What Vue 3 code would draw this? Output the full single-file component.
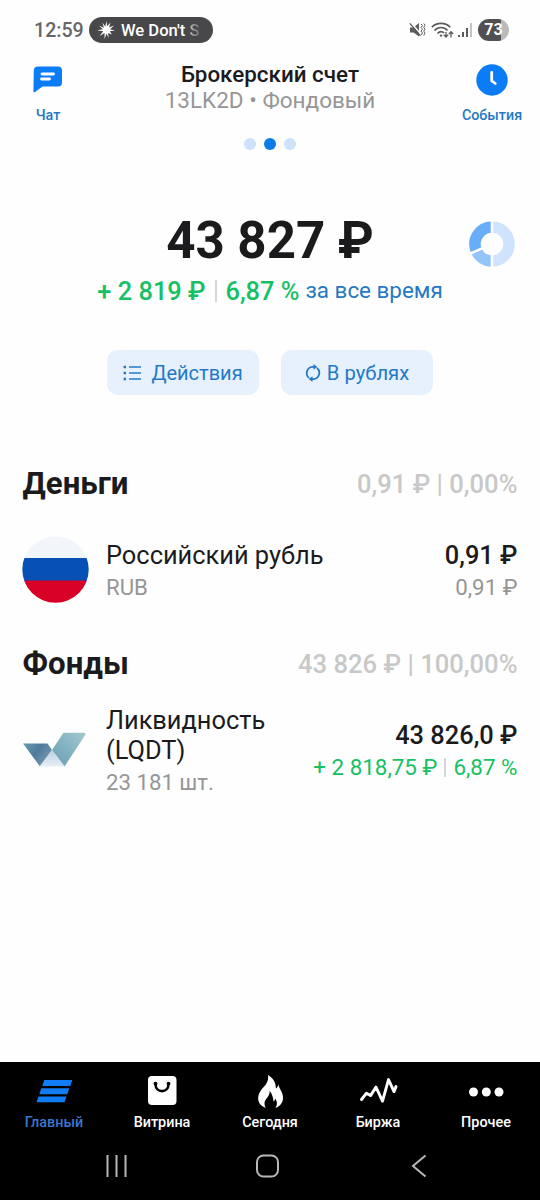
<script setup>
const tabs = [
  { id: 'main', label: 'Главный' },
  { id: 'shop', label: 'Витрина' },
  { id: 'today', label: 'Сегодня' },
  { id: 'market', label: 'Биржа' },
  { id: 'more', label: 'Прочее' },
]
</script>

<template>
  <div class="screen">
    <div class="status">
      <span class="clock">12:59</span>
      <div class="now-playing">
        <svg class="burst" width="18" height="18" viewBox="0 0 18 18">
          <path d="M9.500 0l.6 5.200L13.500 1.500 12 6.500 17 4.500 13 8.200 18 9.500 12.700 10.300 15 13.500 11.200 11.900 11.500 17 9.600 12.500 7.500 18 7.600 12 2.500 15 6.300 10.300 0 9.300 6 8.200 2 4.800 6.900 6.800 5.300 1.500 8.200 5.600z" fill="#fff" />
        </svg>
        <span class="song">We Don't <span class="fade">S</span></span>
      </div>
      <div class="status-right">
        <svg class="mute" width="17" height="16" viewBox="0 0 17 16">
          <path d="M1 5.500h3.500L10 1v13.500L4.500 10.500H1z" fill="#5c5c5e" />
          <path d="M1.500 0L13 13.500" stroke="#fff" stroke-width="1.500" />
          <path d="M.8 1.300L11.500 13.800" stroke="#5c5c5e" stroke-width="1.300" />
          <path d="M12 2l1.500 1.600L12 5.400l1.500 1.800L12 9l1.500 2L12 13M14.800 1.500L16 3.300l-1.200 2L16 7.200l-1.200 2 1.200 2-1.200 2.300" fill="none" stroke="#5c5c5e" stroke-width="1" />
        </svg>
        <svg class="wifi" width="23" height="17" viewBox="0 0 23 17">
          <g fill="none" stroke="#5c5c5e" stroke-width="1.700">
            <path d="M.8 5.300C5.500.1 14.500.1 19.200 5.300M3.500 8.500c3.500-4 9.500-4 13 0M6.500 11.500c2-2.200 4.700-2.200 6.600-.6" />
            <path d="M15 10v5M12.700 12.600l2.300 2.500 2.300-2.500M20 15.500V9.800M17.900 12l2.100-2.400 2.200 2.400" stroke-width="1.300" />
          </g>
          <circle cx="10" cy="13.600" r="1.200" fill="#5c5c5e" />
        </svg>
        <svg class="signal" width="14" height="15" viewBox="0 0 14 15">
          <path d="M0 12h2v2H0zM4 9h2v5H4zM8 5h2v9H8z" fill="#5c5c5e" />
          <path d="M12 0h2v14h-2z" fill="#c4c4c4" />
        </svg>
        <div class="battery">73</div>
      </div>
    </div>

    <header class="header">
      <div class="side chat">
        <svg width="30" height="27" viewBox="0 0 30 27">
          <path d="M5 0h20q4 0 4 4v12q0 4-4 4H9.500L2 25.400Q.4 26.300.4 24.500L.8 4Q1 0 5 0z" fill="#0a7cf6" />
          <path d="M9 7.500h11.500M8.500 12.500h8" stroke="#fff" stroke-width="2.800" stroke-linecap="round" />
        </svg>
        <span>Чат</span>
      </div>
      <div class="account">
        <div class="title">Брокерский счет</div>
        <div class="subtitle">13LK2D • Фондовый</div>
        <div class="dots"><i /><i class="on" /><i /></div>
      </div>
      <div class="side events">
        <svg width="32" height="32" viewBox="0 0 32 32">
          <circle cx="16" cy="16" r="15.700" fill="#0a7cf6" />
          <path d="M15.700 8.500v8.300l3.600 2.700" fill="none" stroke="#fff" stroke-width="2.800" stroke-linecap="round" stroke-linejoin="round" />
        </svg>
        <span>События</span>
      </div>
    </header>

    <section class="summary">
      <div class="balance">43 827 ₽</div>
      <div class="profit">
        <b>+ 2 819 ₽</b><i class="bar" /><b class="pct">6,87 %</b><span>за все время</span>
      </div>
      <svg class="donut" width="46" height="46" viewBox="0 0 46 46">
        <g fill="none" stroke-width="11.500">
          <path d="M23 6a17 17 0 0 1 0 34" stroke="#cfe3fd" />
          <path d="M23 6A17 17 0 0 0 7.600 30.200" stroke="#67adf8" />
          <path d="M7.600 30.200A17 17 0 0 0 23 40" stroke="#94c5fa" />
        </g>
        <path d="M23 0v12M23 34v12M1 32.800l12-5.400" stroke="#fff" stroke-width="2.600" />
      </svg>
    </section>

    <div class="actions">
      <button class="btn">
        <svg class="list-icon" width="19" height="16" viewBox="0 0 19 16">
          <path d="M6 2h12M6 8h12M6 14h12" stroke="#2379c6" stroke-width="1.700" />
          <path d="M.6.8H3v2.400H.6zM.6 6.800H3v2.400H.6zM.6 12.800H3v2.400H.6z" fill="#2379c6" />
        </svg>
        <span class="t-actions">Действия</span>
      </button>
      <button class="btn">
        <svg class="swap-icon" width="16" height="18" viewBox="0 0 16 18">
          <g fill="none" stroke="#2379c6" stroke-width="1.800">
            <path d="M4 14A6.300 6.300 0 0 1 7.500 2.900H10M12 4A6.300 6.300 0 0 1 8.500 15.100H6" />
          </g>
          <path d="M8.500 0l3.800 2.900-3.800 2.800zM7.500 18l-3.800-2.900 3.800-2.800z" fill="#2379c6" />
        </svg>
        <span class="t-rub">В рублях</span>
      </button>
    </div>

    <section class="group">
      <div class="group-head">
        <h2>Деньги</h2><span>0,91 ₽ | 0,00%</span>
      </div>
      <div class="row">
        <svg class="flag" width="68" height="68" viewBox="0 0 68 68">
          <clipPath id="flag-clip"><circle cx="33.500" cy="33.500" r="33.200" /></clipPath>
          <g clip-path="url(#flag-clip)">
            <path d="M0 0h68v23H0z" fill="#f2f6fa" />
            <path d="M0 22h68v23H0z" fill="#0750b5" />
            <path d="M0 44.500h68V68H0z" fill="#d80027" />
          </g>
        </svg>
        <div class="name">
          <div>Российский рубль</div>
          <div class="code">RUB</div>
        </div>
        <div class="value">
          <div>0,91 ₽</div>
          <div class="v-sub">0,91 ₽</div>
        </div>
      </div>
    </section>

    <section class="group funds">
      <div class="group-head">
        <h2>Фонды</h2><span>43 826 ₽ | 100,00%</span>
      </div>
      <div class="row row-fund">
        <svg class="fund-logo" width="68" height="36" viewBox="0 0 68 36">
          <defs>
            <linearGradient id="wing-l" x1="0" y1="0" x2="1" y2="0.600"><stop stop-color="#699caf" /><stop offset=".5" stop-color="#517b9b" /><stop offset="1" stop-color="#7798af" /></linearGradient>
            <linearGradient id="wing-r" x1="1" y1="0" x2="0" y2="1"><stop stop-color="#a3c7d0" /><stop offset="1" stop-color="#669fb3" /></linearGradient>
            <linearGradient id="wing-m" x1="0" y1="0" x2="0" y2="1"><stop stop-color="#b9cfdf" /><stop offset="1" stop-color="#e8eff6" /></linearGradient>
          </defs>
          <path d="M1 11.500H25.500L30 18 18 34.500z" fill="url(#wing-l)" />
          <path d="M41.500.8H61.500q3 0 1.500 2.500L42.500 34.500 30 18z" fill="url(#wing-r)" />
          <path d="M30 18L42.500 34.500H17.500z" fill="url(#wing-m)" />
        </svg>
        <div class="name">
          <div>Ликвидность<br>(LQDT)</div>
          <div class="code">23 181 шт.</div>
        </div>
        <div class="value">
          <div>43 826,0 ₽</div>
          <div class="v-gain"><span>+ 2 818,75 ₽</span><i class="bar" /><span>6,87 %</span></div>
        </div>
      </div>
    </section>

    <footer class="bottom">
      <nav class="tabs">
        <div v-for="t in tabs" :key="t.id" class="tab" :class="t.id">
          <svg width="40" height="36" viewBox="0 0 40 36">
            <path v-if="t.id === 'main'" d="M10.300 6H38.300l-2 6H8.300zM7.300 14.200h28l-2 6h-28zM4.500 22.500h28l-2 5.700h-28z" fill="#117df5" />
            <template v-else-if="t.id === 'shop'">
              <rect x="6" y="2" width="28.500" height="29" rx="4" fill="#fff" />
              <path d="M13.500 10c0 9.500 13 9.500 13 0" fill="none" stroke="#000" stroke-width="2.600" stroke-linecap="round" />
              <circle cx="13.500" cy="9.700" r="1.900" /><circle cx="26.500" cy="9.700" r="1.900" />
            </template>
            <path v-else-if="t.id === 'today'" d="M18 1c7.500 4.500 7.500 9.500 8 13.500 1.700-1.200 2.200-2.700 2-4.500 1.300 5 5.500 8.500 5 14.500-.3 4-2.500 7.500-7.500 9.500 2.300-4 1.500-7-.3-9.500-.2 1.500-.7 2.300-1.700 3-.3-4-1.300-7.500-3.800-10.500.3 6-5.200 7.500-5.200 12.500 0 2 .8 3.500 1.500 4.500C6.500 31 6.500 21.500 11.500 15.500c4-4.500 7.500-8 6.500-14.500z" fill="#fff" />
            <path v-else-if="t.id === 'market'" d="M3.500 25.500l5-6.300 4 2.400 5.500-8.500 6.500 14 6-21.500 5.500 12 2-5" fill="none" stroke="#fff" stroke-width="2.900" stroke-linejoin="round" stroke-linecap="round" />
            <g v-else fill="#fff"><circle cx="7.500" cy="18" r="4.500" /><circle cx="20.300" cy="18" r="4.500" /><circle cx="33" cy="18" r="4.500" /></g>
          </svg>
          <span>{{ t.label }}</span>
        </div>
      </nav>
      <svg class="system" width="540" height="66" viewBox="0 0 540 66" fill="none" stroke="#b8b8b8" stroke-width="2">
        <path d="M107.500 21v22M116.500 21v22M125.500 21v22" />
        <rect x="257" y="21.500" width="21" height="21" rx="6.500" />
        <path d="M425.500 21.500L413 32l12.500 10.500" />
      </svg>
    </footer>
  </div>
</template>

<style>
body { margin: 0; }
</style>

<style scoped>
.screen { width: 540px; height: 1200px; display: flex; flex-direction: column; background: #fefefe; font-family: Roboto, "Noto Sans", sans-serif; color: #1b1b1d; overflow: hidden; white-space: nowrap; }
.status { height: 60px; display: flex; align-items: center; padding: 0 31px 0 34px; box-sizing: border-box; }
.clock { font-size: 19.600px; font-weight: 500; color: #666668; width: 55px; }
.now-playing { width: 124px; height: 26px; border-radius: 13px; background: #48484a; color: #fff; display: flex; align-items: center; box-sizing: border-box; padding-left: 8px; }
.song { margin-left: 6px; font-size: 16.600px; font-weight: 500; }
.fade { background: linear-gradient(90deg, #bbb, #666); background-clip: text; color: transparent; }
.status-right { margin-left: auto; display: flex; align-items: center; }
.wifi { margin-left: 5px; }
.signal { margin-left: 4px; }
.battery { width: 31px; height: 22px; margin-left: 6px; border-radius: 11px; background: linear-gradient(90deg, #505052 73%, #bbb 73%); color: #fff; font-size: 16px; font-weight: 700; line-height: 22px; text-align: center; }
.header { height: 110px; display: flex; justify-content: space-between; }
.side { width: 96px; display: flex; flex-direction: column; align-items: center; font-size: 14.300px; font-weight: 500; color: #2379c6; }
.side svg { height: 32px; margin-top: 4px; }
.side span { margin-top: 10px; line-height: 18px; }
.account { text-align: center; display: flex; flex-direction: column; align-items: center; }
.title { font-size: 22.400px; font-weight: 500; line-height: 26px; margin-top: 1px; }
.subtitle { font-size: 22.500px; line-height: 26px; color: #969696; }
.dots { display: flex; gap: 8px; margin-top: 25px; }
.dots i { width: 12px; height: 12px; border-radius: 50%; background: #cfe2fb; }
.dots .on { background: #0a7be9; }
.summary { height: 180px; position: relative; text-align: center; box-sizing: border-box; padding-top: 41px; }
.balance { font-size: 51px; line-height: 60px; font-weight: 700; }
.profit { display: flex; justify-content: center; align-items: center; font-size: 25.400px; line-height: 36px; margin-top: 2px; color: #16c065; }
.profit b { font-weight: 500; }
.profit span { font-size: 22.400px; margin-left: 6px; color: #2379c6; position: relative; top: -1px; }
.bar { width: 2px; height: 22px; background: #d6d6d6; margin: 0 9px; }
.donut { position: absolute; left: 469px; top: 51px; }
.actions { display: flex; justify-content: center; gap: 22px; }
.btn { width: 152px; height: 45px; border: 0; padding: 0; border-radius: 11px; background: #e6f1fd; color: #2379c6; font: 400 20px Roboto, sans-serif; display: flex; align-items: center; justify-content: center; white-space: nowrap; }
.list-icon { margin-right: 9px; }
.t-rub { font-size: 20.200px; }
.swap-icon { margin-right: 6px; }
.group { padding: 0 22.500px 0 22px; margin-top: 68px; }
.group-head { display: flex; justify-content: space-between; align-items: center; height: 40px; font-size: 25.600px; font-weight: 500; color: #c8c8c8; }
.group-head span { padding-top: 2px; }
h2 { margin: 0 0 0 .6px; font-size: 31.200px; font-weight: 700; color: #1b1b1d; }
.row { display: flex; align-items: center; margin-top: 33px; height: 68px; }
.name { margin-left: 16px; padding-top: 4px; font-size: 25.400px; line-height: 30px; }
.code { font-size: 22.200px; line-height: 35px; color: #969696; }
.value { margin-left: auto; padding-top: 4px; text-align: right; font-size: 25.400px; line-height: 30px; font-weight: 500; }
.v-sub { font-size: 22.300px; line-height: 35px; font-weight: 400; color: #969696; }
.funds { margin-top: 39px; }
.row-fund { margin-top: 19px; height: 96px; }
.v-gain { display: flex; align-items: center; justify-content: flex-end; font-size: 22.400px; line-height: 35px; font-weight: 400; color: #16c065; }
.v-gain .bar { margin: 0 7px; height: 19px; }
.bottom { margin-top: auto; height: 138px; background: #000; display: flex; flex-direction: column; }
.tabs { display: flex; height: 72px; padding-top: 12px; box-sizing: border-box; }
.tab { width: 108px; display: flex; flex-direction: column; align-items: center; color: #fff; font-size: 14.400px; font-weight: 500; flex: none; }
.tab svg { flex: none; }
.tab span { line-height: 20px; margin-top: 3px; }
.main span { color: #3977cf; }
.system { height: 66px; flex: none; }
</style>
